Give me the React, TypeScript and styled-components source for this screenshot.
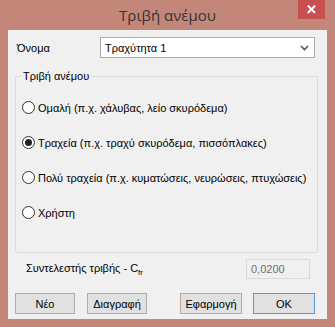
import React from "react";
import styled, { createGlobalStyle } from "styled-components";

const Global = createGlobalStyle`
  html, body { margin: 0; padding: 0; background: #c3877a; }
  * { box-sizing: border-box; }
`;

const Frame = styled.div`
  width: 335px;
  height: 327px;
  background: #c3877a;
  display: flex;
  flex-direction: column;
  font-family: "Liberation Sans", "Open Sans", sans-serif;
  font-size: 11px;
  color: #000;
  white-space: nowrap;
`;

const TitleBar = styled.div`
  height: 30px;
  display: flex;
  align-items: flex-start;
  justify-content: center;
  position: relative;
`;

const Title = styled.div`
  font-family: "Open Sans", sans-serif;
  font-size: 15px;
  line-height: 30px;
  color: #333;
`;

const CloseBtn = styled.div`
  position: absolute;
  top: 0;
  right: 10px;
  width: 27px;
  height: 19px;
  background: #c75050;
  color: #fff;
  font-size: 13px;
  font-weight: 700;
  display: flex;
  align-items: center;
  justify-content: center;
`;

const Client = styled.div`
  margin: 0 8px;
  width: 319px;
  height: 289px;
  background: #f0f0f0;
  display: flex;
  flex-direction: column;
`;

const NameRow = styled.div`
  margin-top: 7px;
  display: flex;
  align-items: center;
  padding-left: 9px;
  height: 21px;
`;

const NameLabel = styled.div`
  width: 83px;
`;

const Select = styled.div`
  width: 215px;
  height: 21px;
  border: 1px solid #acacac;
  background: #fff;
  display: flex;
  align-items: center;
  justify-content: space-between;
  padding: 0 5px 0 4px;
`;

const Group = styled.div`
  margin: 18px 0 0 7px;
  width: 303px;
  height: 177px;
  border: 1px solid #dcdcdc;
  border-radius: 2px;
  display: flex;
  flex-direction: column;
`;

const Legend = styled.div`
  align-self: flex-start;
  margin: -9px 0 0 5px;
  padding: 0 2px;
  height: 16px;
  line-height: 16px;
  background: #f0f0f0;
`;

const RadioList = styled.div`
  padding-top: 6px;
  display: flex;
  flex-direction: column;
`;

const RadioRow = styled.div`
  height: 35px;
  display: flex;
  align-items: center;
  padding-left: 6px;
  gap: 3px;
`;

const RadioCircle = styled.div<{ $checked?: boolean }>`
  flex: 0 0 13px;
  width: 13px;
  height: 13px;
  border-radius: 50%;
  border: 1px solid #333;
  background: #fff;
  display: flex;
  align-items: center;
  justify-content: center;
  &::after {
    content: "";
    display: ${(p) => (p.$checked ? "block" : "none")};
    width: 7px;
    height: 7px;
    border-radius: 50%;
    background: #222;
  }
`;

const CoefRow = styled.div`
  margin-top: 6px;
  height: 20px;
  display: flex;
  align-items: center;
  justify-content: space-between;
  padding: 0 17px 0 18px;
`;

const Input = styled.div`
  width: 64px;
  height: 20px;
  border: 1px solid #d9d9d9;
  background: #f0f0f0;
  color: #6d6d6d;
  display: flex;
  align-items: center;
  padding-left: 4px;
`;

const ButtonRow = styled.div`
  margin-top: 14px;
  display: flex;
  padding-left: 7px;
`;

const Button = styled.div<{ $w: number; $gap: number; $primary?: boolean }>`
  width: ${(p) => p.$w}px;
  height: 21px;
  margin-left: ${(p) => p.$gap}px;
  border: 1px solid ${(p) => (p.$primary ? "#5a9bd5" : "#adadad")};
  background: #e1e1e1;
  display: flex;
  align-items: center;
  justify-content: center;
`;

const Sub = styled.sub`
  font-size: 8px;
  vertical-align: -3px;
`;

export default function App() {
  const options = [
    { t: "Ομαλή (π.χ. χάλυβας, λείο σκυρόδεμα)", c: false },
    { t: "Τραχεία (π.χ. τραχύ σκυρόδεμα, πισσόπλακες)", c: true },
    { t: "Πολύ τραχεία (π.χ. κυματώσεις, νευρώσεις, πτυχώσεις)", c: false },
    { t: "Χρήστη", c: false },
  ];
  return (
    <>
      <Global />
      <Frame>
        <TitleBar>
          <Title>Τριβή ανέμου</Title>
          <CloseBtn>✕</CloseBtn>
        </TitleBar>
        <Client>
          <NameRow>
            <NameLabel>Όνομα</NameLabel>
            <Select>
              <span>Τραχύτητα 1</span>
              <svg width="9" height="6" viewBox="0 0 9 6">
                <path d="M1 1 L4.5 4.5 L8 1" stroke="#555" strokeWidth="1.6" fill="none" />
              </svg>
            </Select>
          </NameRow>
          <Group>
            <Legend>Τριβή ανέμου</Legend>
            <RadioList>
              {options.map((o) => (
                <RadioRow key={o.t}>
                  <RadioCircle $checked={o.c} />
                  <span>{o.t}</span>
                </RadioRow>
              ))}
            </RadioList>
          </Group>
          <CoefRow>
            <span>
              Συντελεστής τριβής - C<Sub>fr</Sub>
            </span>
            <Input>0,0200</Input>
          </CoefRow>
          <ButtonRow>
            <Button $w={60} $gap={0}>Νέο</Button>
            <Button $w={60} $gap={12}>Διαγραφή</Button>
            <Button $w={62} $gap={33}>Εφαρμογή</Button>
            <Button $w={62} $gap={11} $primary>OK</Button>
          </ButtonRow>
        </Client>
      </Frame>
    </>
  );
}
